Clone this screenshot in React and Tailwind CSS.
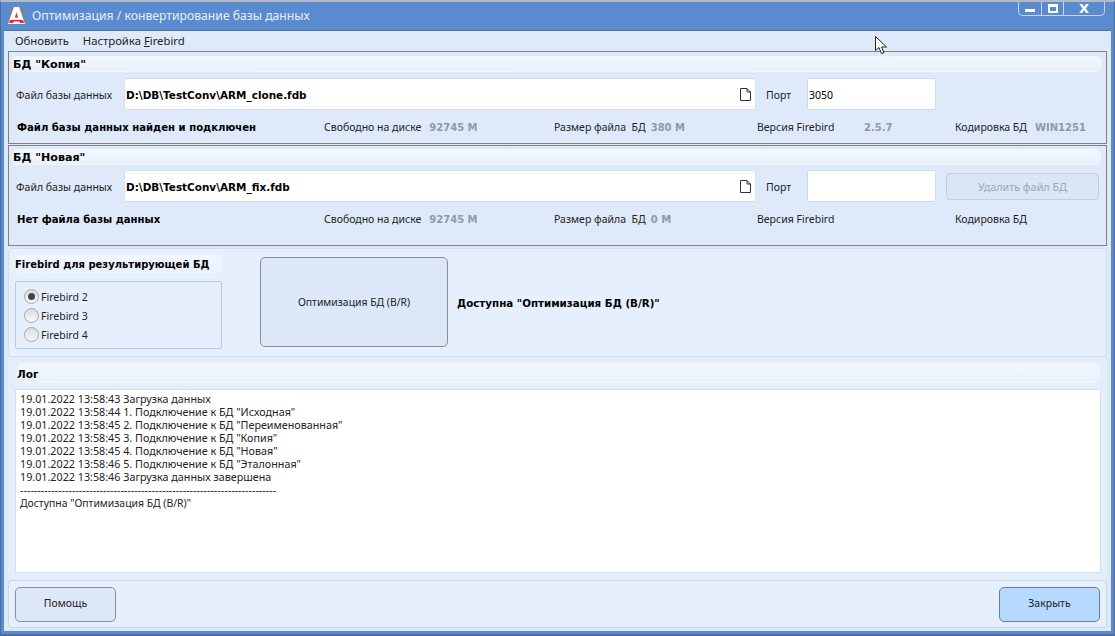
import React from "react";

const font = "font-['Noto_Sans',sans-serif]";
const boldFont = "font-['DejaVu_Sans',sans-serif] font-bold";

function SectionBar({ children, className }) {
  return (
    <div className={"flex items-center whitespace-nowrap rounded-[5px] border border-[#f1f6fe] bg-gradient-to-b from-[#f2f7fe] to-[#e8f1fc] text-black " + boldFont + " " + className}>
      {children}
    </div>
  );
}

function FileIcon() {
  return (
    <svg width="13" height="15" viewBox="0 0 13 15" fill="none" stroke="#333" strokeWidth="1">
      <path d="M1.5 1.5h6.5l3.5 3.5v8.5h-10z" fill="#fff" />
      <path d="M8 1.5v3.5h3.5" />
    </svg>
  );
}

function Field({ path, port, children }) {
  return (
    <div className="flex h-8 items-center">
      <span className="w-[112px] whitespace-nowrap pl-1 pt-[4px] text-[10.5px] text-[#222]">Файл базы данных</span>
      <div className="flex h-8 w-[632px] items-center justify-between rounded-[2px] border border-[#d3e0f2] bg-white pl-[1px] pr-[3px]">
        <span className={"pt-[4px] text-[10.45px] text-black " + boldFont}>{path}</span>
        <FileIcon />
      </div>
      <span className="ml-[10px] w-[41px] pt-[4px] text-[10.5px] text-[#222]">Порт</span>
      <div className="flex h-8 w-[129px] items-center rounded-[2px] border border-[#cbdcf2] bg-white pl-[1px] pt-[4px] text-[10.5px] text-black">{port}</div>
      {children}
    </div>
  );
}

function Value({ children, className }) {
  return <b className={"text-[10px] text-[#8e99a8] " + boldFont + " " + className}>{children}</b>;
}

function Status({ title, free, size, version, charset }) {
  return (
    <div className="flex items-center whitespace-nowrap text-[10.5px] text-[#222]">
      <span className={"w-[312px] pl-[5px] text-[10.1px] text-black " + boldFont}>{title}</span>
      <span className="flex w-[230px] items-center">Свободно на диске<Value className="ml-2">{free}</Value></span>
      <span className="flex w-[203px] items-center">Размер файла&nbsp; БД<Value className="ml-[5px]">{size}</Value></span>
      <span className="flex w-[198px] items-center"><span className="w-[107px]">Версия Firebird</span><Value>{version}</Value></span>
      <span className="flex items-center">Кодировка БД<Value className="ml-2">{charset}</Value></span>
    </div>
  );
}

function Radio({ label, checked }) {
  return (
    <div className="flex h-[19px] items-center gap-[2px] pl-2 text-[10.5px] text-[#222]">
      <span className="flex h-[15px] w-[15px] items-center justify-center rounded-full border border-[#a4a8ae] bg-gradient-to-b from-[#d8dadd] to-[#fbfbfc]">
        {checked && <span className="h-[7px] w-[7px] rounded-full bg-[#444]" />}
      </span>
      <span className="pt-[3px]">{label}</span>
    </div>
  );
}

const logLines = [
  "19.01.2022 13:58:43 Загрузка данных",
  "19.01.2022 13:58:44 1. Подключение к БД \"Исходная\"",
  "19.01.2022 13:58:45 2. Подключение к БД \"Переименованная\"",
  "19.01.2022 13:58:45 3. Подключение к БД \"Копия\"",
  "19.01.2022 13:58:45 4. Подключение к БД \"Новая\"",
  "19.01.2022 13:58:46 5. Подключение к БД \"Эталонная\"",
  "19.01.2022 13:58:46 Загрузка данных завершена",
  "--------------------------------------------------------------------------",
];

export default function App() {
  return (
    <div className={"relative flex h-[636px] w-[1115px] flex-col overflow-hidden border-x border-b-2 border-t-2 border-x-[#4a6f9f] border-b-[#4a6f9f] border-t-[#b4bcc8] bg-[#5a8bd1] " + font}>
      {/* title bar */}
      <div className="flex h-[28px] shrink-0 items-start pl-[7px] pt-[5px] text-[12.2px] text-[#e8eef8]">
        <svg width="17" height="17" viewBox="0 0 17 17">
          <path d="M0 0h17v17h-17z" fill="#6f86a6" />
          <path d="M6 0h5l6 17h-17z" fill="#fff" />
          <path d="M8.5 5.5l1.7 5h-3.4z" fill="#e8262a" />
          <path d="M2 13h13l1 3h-4l-.7-1.5h-5.6l-.7 1.5h-4z" fill="#e8262a" />
        </svg>
        <span className="ml-[7px]">Оптимизация / конвертирование базы данных</span>
        <div className="-mt-[5px] ml-auto mr-[9px] flex h-[14px] w-[87px] rounded-b-[5px] border border-t-0 border-[#c4d6ef] text-white">
          <span className="flex w-[23px] items-end justify-center border-r border-[#c4d6ef] pb-[3px]"><span className="h-[3px] w-[10px] bg-white" /></span>
          <span className="flex w-[22px] items-center justify-center border-r border-[#c4d6ef]"><span className="h-[9px] w-[10px] border-2 border-t-[3px] border-white" /></span>
          <span className={"flex flex-1 items-center justify-center text-[13px] leading-none " + boldFont}>X</span>
        </div>
      </div>

      {/* window body */}
      <div className="mx-[3px] mb-[3px] flex min-h-0 flex-1 flex-col border-t border-[#5a6f8c] bg-[#deeafa] px-1">
        <div className="flex h-5 shrink-0 items-center gap-[14px] pl-[7px] text-[11.3px] text-[#222]">
          <span>Обновить</span>
          <span>Настройка <u>F</u>irebird</span>
        </div>

        <section className="h-[93px] shrink-0 border border-[#808080] pl-[3px] pt-[4px]">
          <SectionBar className="h-[16px] w-[1089px] pt-[3px] text-[11.1px]">БД "Копия"</SectionBar>
          <div className="mt-[6px]"><Field path="D:\DB\TestConv\ARM_clone.fdb" port="3050" /></div>
          <div className="mt-[10px]"><Status title="Файл базы данных найден и подключен" free="92745 M" size="380 M" version="2.5.7" charset="WIN1251" /></div>
        </section>

        <section className="mt-[1px] h-[101px] shrink-0 border border-[#808080] pl-[3px] pt-[3px]">
          <SectionBar className="h-[16px] w-[1089px] pt-[3px] text-[11.1px]">БД "Новая"</SectionBar>
          <div className="mt-[5px]">
            <Field path="D:\DB\TestConv\ARM_fix.fdb">
              <button className="ml-[10px] h-[27px] w-[153px] rounded-[4px] border border-[#c0cede] bg-[#dbe6f4] pt-[2px] text-[10.75px] text-[#9aa6b5]">Удалить файл БД</button>
            </Field>
          </div>
          <div className="mt-[10px]"><Status title="Нет файла базы данных" free="92745 M" size="0 M" version="" charset="" /></div>
        </section>

        <section className="mt-[2px] flex h-[109px] shrink-0 rounded-[4px] border border-[#d0def2] bg-[#e6f0fc] pl-[6px]">
          <div className="w-[207px] pt-[6px]">
            <SectionBar className="h-[18px] border-l-0 text-[10px]">Firebird для результирующей БД</SectionBar>
            <div className="mt-[8px] flex h-[68px] flex-col justify-center rounded-[2px] border border-[#b8cbe2] bg-[#e6f0fc]">
              <Radio label="Firebird 2" checked />
              <Radio label="Firebird 3" />
              <Radio label="Firebird 4" />
            </div>
          </div>
          <button className="ml-[38px] mt-[8px] h-[90px] w-[188px] rounded-[5px] border border-[#8a9097] bg-[#dce8f8] pt-[2px] text-[10.4px] text-[#222]">Оптимизация БД (B/R)</button>
          <span className={"ml-[9px] mt-[47px] text-[10.3px] text-black " + boldFont}>Доступна "Оптимизация БД (B/R)"</span>
        </section>

        <section className="mt-[1px] flex h-[222px] shrink-0 flex-col rounded-[4px] bg-[#e4eefb] pl-[7px] pt-[5px]">
          <SectionBar className="ml-[2px] h-[20px] w-[1083px] border-l-0 pt-[4px] text-[10.5px]">Лог</SectionBar>
          <div className="mt-[6px] h-[184px] w-[1086px] border border-[#d3e0f2] bg-white pl-1 pt-[3px] text-[10.75px] leading-[13px] text-[#222]">
            {logLines.map((line, i) => (
              <div key={i} className="whitespace-pre">{line}</div>
            ))}
            <div className="whitespace-pre text-[10.4px]">Доступна "Оптимизация БД (B/R)"</div>
          </div>
        </section>

        <section className="flex h-[48px] shrink-0 items-center justify-between rounded-[4px] border border-[#c8d8ee] bg-[#e6f0fc] px-[6px]">
          <button className="h-[35px] w-[101px] rounded-[5px] border border-[#8a9097] bg-[#dce8f8] text-[10.5px] text-[#222]">Помощь</button>
          <button className="h-[35px] w-[101px] rounded-[5px] border border-[#6f7d8c] bg-[#b5dafe] text-[10.5px] text-[#222]">Закрыть</button>
        </section>
      </div>

      {/* mouse pointer */}
      <svg className="absolute left-[874px] top-[34px]" width="14" height="19" viewBox="0 0 14 19">
        <path d="M.5.5v14l3.5-3 2.5 6 2.5-1-2.5-5.5h5z" fill="#fff" stroke="#222" />
      </svg>
    </div>
  );
}
